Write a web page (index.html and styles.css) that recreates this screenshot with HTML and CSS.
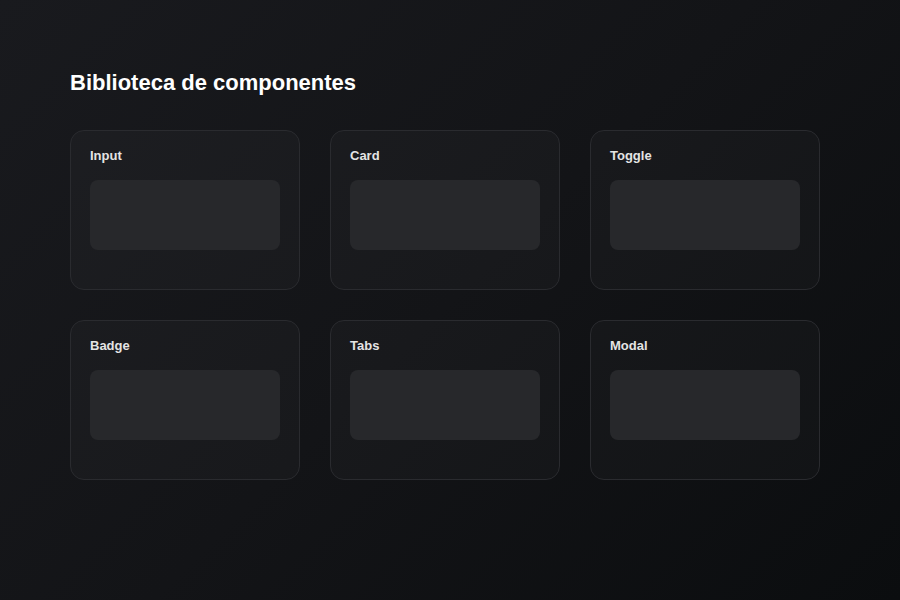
FILE: index.html
```html
<!DOCTYPE html>
<html lang="es">
<head>
  <meta charset="UTF-8" />
  <title>Biblioteca de componentes</title>
  <link rel="stylesheet" href="styles.css">
</head>
<body>
  <main class="library">
    <h1>Biblioteca de componentes</h1>
    <div class="grid">
      <div class="card">
        <div class="card-title">Input</div>
        <div class="preview"></div>
      </div>
      <div class="card">
        <div class="card-title">Card</div>
        <div class="preview"></div>
      </div>
      <div class="card">
        <div class="card-title">Toggle</div>
        <div class="preview"></div>
      </div>
      <div class="card">
        <div class="card-title">Badge</div>
        <div class="preview"></div>
      </div>
      <div class="card">
        <div class="card-title">Tabs</div>
        <div class="preview"></div>
      </div>
      <div class="card">
        <div class="card-title">Modal</div>
        <div class="preview"></div>
      </div>
    </div>
  </main>
</body>
</html>
```

FILE: styles.css
```css
* {
  box-sizing: border-box;
}
html, body {
  height: 100%;
}
body {
  margin: 0;
  font-family: "Liberation Sans", Arial, sans-serif;
  background: linear-gradient(135deg, #191a1e 0%, #131417 50%, #0b0d0f 100%);
  color: #fff;
}
.library {
  padding: 70px 70px 0;
}
h1 {
  margin: 0 0 35px;
  font-size: 22px;
  line-height: 25px;
  font-weight: bold;
  color: #fff;
}
.grid {
  display: grid;
  grid-template-columns: repeat(3, 230px);
  grid-auto-rows: 160px;
  gap: 30px;
}
.card {
  background: rgba(255, 255, 255, 0.025);
  border: 1px solid #2a2b2f;
  border-radius: 14px;
  padding: 17px 19px 0;
}
.card-title {
  font-size: 13px;
  line-height: 15px;
  font-weight: bold;
  color: #e4e4e4;
  margin-bottom: 17px;
}
.preview {
  height: 70px;
  border-radius: 8px;
  background: #27282b;
}
```
